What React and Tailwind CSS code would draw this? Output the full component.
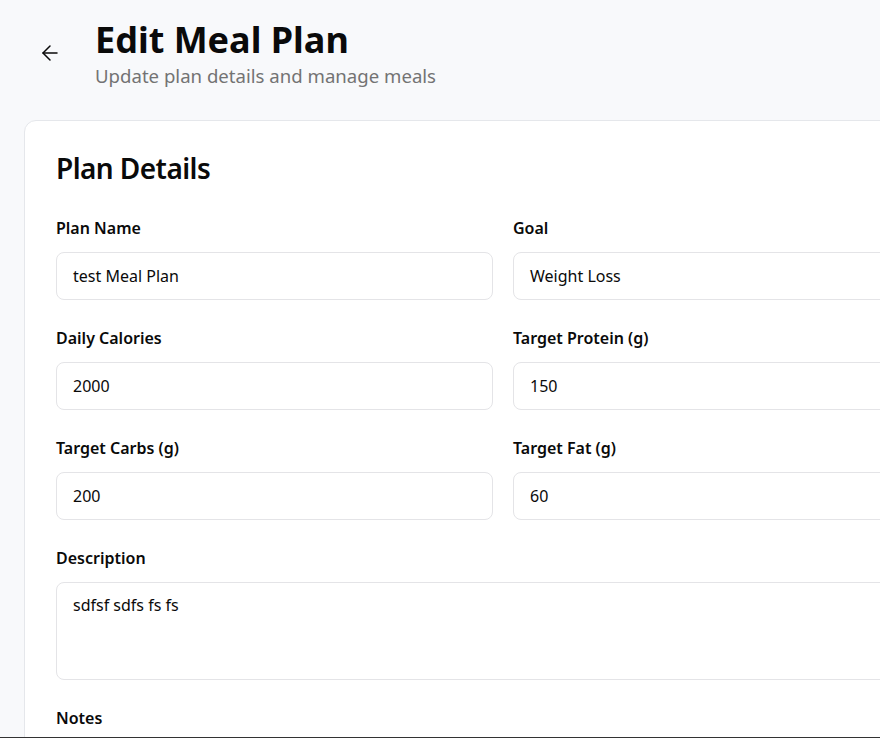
import React from "react";
import { ArrowLeft } from "lucide-react";

function Field({ label, value }) {
  return (
    <div className="flex flex-col">
      <label className="text-base leading-6 font-semibold text-[#0a0a0a]">{label}</label>
      <div className="mt-3 h-12 rounded-lg border border-[#e4e4e7] bg-white px-4 flex items-center text-base text-[#0a0a0a]">
        {value}
      </div>
    </div>
  );
}

export default function App() {
  return (
    <div
      className="w-[880px] h-[738px] overflow-hidden bg-[#f8f9fb] border-b border-[#333333]"
      style={{ fontFamily: '"Noto Sans", "Open Sans", sans-serif' }}
    >
      <div className="w-[1006px] px-6 pt-5">
        <div className="flex items-center">
          <button className="ml-[6px] mb-1 h-10 w-10 flex items-center justify-center rounded-md text-[#0a0a0a]">
            <ArrowLeft size={24} strokeWidth={1.5} />
          </button>
          <div className="ml-[25px]">
            <h1 className="text-4xl leading-10 font-bold text-[#0a0a0a]">Edit Meal Plan</h1>
            <p className="text-[18.6px] leading-7 mt-[2px] text-[#737373]">Update plan details and manage meals</p>
          </div>
        </div>

        <div className="mt-[30px] rounded-xl border border-[#e5e7eb] bg-white p-[31px]">
          <h2 className="text-[28px] leading-8 font-semibold tracking-[-0.02em] text-[#0a0a0a]">Plan Details</h2>
          <div className="mt-8 grid grid-cols-2 gap-x-5 gap-y-[26px]">
            <Field label="Plan Name" value="test Meal Plan" />
            <Field label="Goal" value="Weight Loss" />
            <Field label="Daily Calories" value="2000" />
            <Field label="Target Protein (g)" value="150" />
            <Field label="Target Carbs (g)" value="200" />
            <Field label="Target Fat (g)" value="60" />
            <div className="col-span-2 flex flex-col">
              <label className="text-base leading-6 font-semibold text-[#0a0a0a]">Description</label>
              <div className="mt-3 h-[98px] rounded-lg border border-[#e4e4e7] bg-white px-4 py-[10px] text-base leading-6 text-[#0a0a0a]">
                sdfsf sdfs fs fs
              </div>
            </div>
            <div className="col-span-2 flex flex-col">
              <label className="text-base leading-6 font-semibold text-[#0a0a0a]">Notes</label>
              <div className="mt-3 h-[98px] rounded-lg border border-[#e4e4e7] bg-white" />
            </div>
          </div>
        </div>
      </div>
    </div>
  );
}
